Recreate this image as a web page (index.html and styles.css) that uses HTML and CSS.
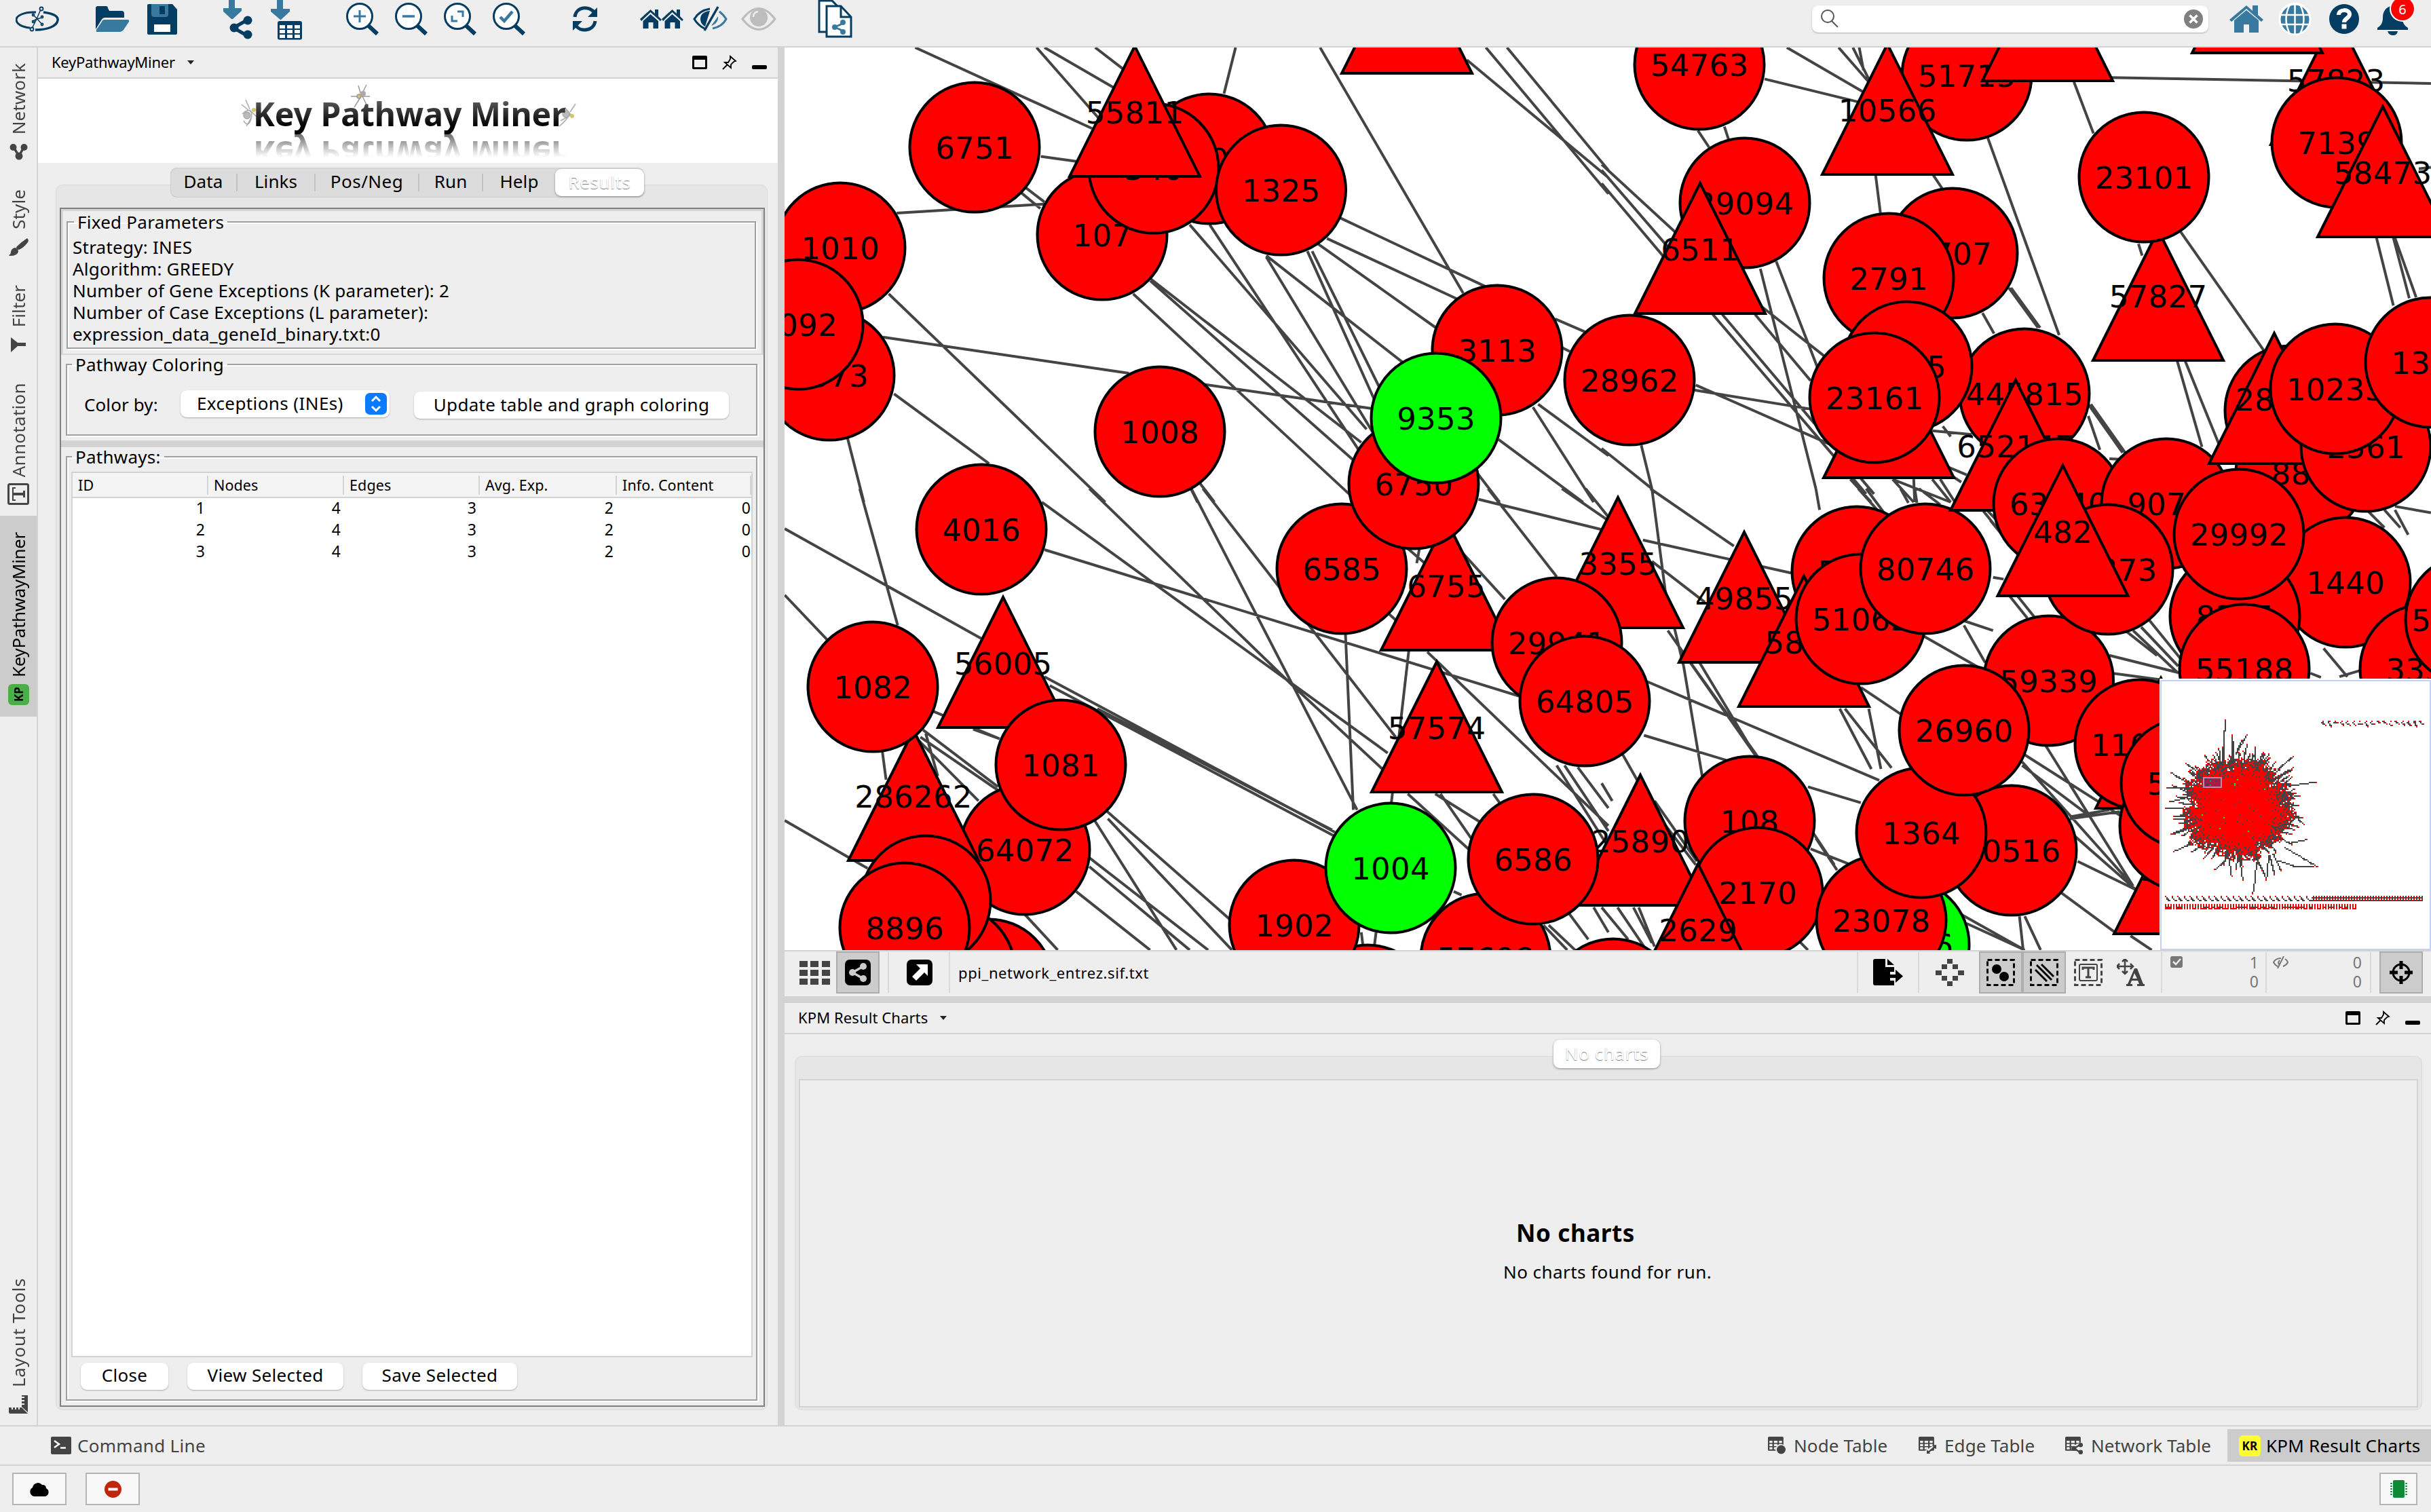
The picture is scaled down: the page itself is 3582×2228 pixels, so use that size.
FILE: index.html
```html
<!DOCTYPE html>
<html lang="en">
<head>
<meta charset="utf-8">
<title>KeyPathwayMiner</title>
<link rel="stylesheet" href="styles.css">
</head>
<body>
<svg class="defs" width="0" height="0">
  <defs>
    <g id="share"><path d="M9 14 24 5M9 16 24 26" stroke="currentColor" stroke-width="4.5"/><circle cx="7" cy="15" r="6.5"/><circle cx="25" cy="6" r="6"/><circle cx="25" cy="25" r="6"/></g>
    <g id="grid"><path fill-rule="evenodd" d="M2 0h22q2 0 2 2v22q0 2-2 2H2q-2 0-2-2V2q0-2 2-2zM2.500 7.500v4h5v-4zm7.500 0v4h6v-4zm8.500 0v4h5v-4zM2.500 13.500v4h5v-4zm7.500 0v4h6v-4zm8.500 0v4h5v-4zM2.500 19.500v4h5v-4zm7.500 0v4h6v-4zm8.500 0v4h5v-4z"/></g>
    <g id="lens"><circle cx="20" cy="24" r="18.500" fill="#fff" stroke="#053c61" stroke-width="3"/><path d="M33 38 46 50" stroke="#053c61" stroke-width="6" /></g>
    <g id="house"><path d="M0 15 15.500 1 22 7V1h5v10l5 5-2 2L15.500 5 2 18z"/><path d="M4.500 18 15.500 8 27 18v11h-7.500v-9h-7v9h-8z"/></g>
  </defs>
</svg>

<header class="toolbar">
  <svg class="tool" width="64" viewBox="23 0 64 70" fill="none" stroke="#053c61"><path d="M53 18C34 17 24 24 24 29c0 6 8 11 20 12" stroke-width="3"/><path d="M64 18c15 2 22 6 21 12-1 8-14 14-33 14" stroke-width="3.500"/><path d="M60 14 54 28 47 42M49 22l6 6 7 8M49 31l5-3 8-2" stroke-width="1.500"/><g fill="#eee" stroke-width="1.800"><circle cx="61" cy="13" r="2.500"/><circle cx="47" cy="43" r="2.500"/><circle cx="49" cy="22" r="1.500"/><circle cx="62" cy="25" r="1.500"/><circle cx="62" cy="36" r="1.500"/><circle cx="49" cy="32" r="1.500"/></g></svg>
  <div class="tools file">
    <svg class="tool" width="50" viewBox="141 0 50 70"><path fill="#053c61" d="M141 12q0-3 3-3h12q3 0 3 3l2 4h18q4 0 4 4v6h-28q-4 0-6 4l-8 13z"/><path fill="#3879a0" d="M154 29h34q3 0 2 3l-8 12q-2 3-5 3h-34q-2 0-1-3l8-12q1-3 4-3z"/></svg>
    <svg class="tool" width="45" viewBox="217 0 45 70"><path fill="#053c61" d="M219 6h35l7 8v35q0 2-2 2h-40q-2 0-2-2V8q0-2 2-2z"/><path fill="#3879a0" d="M223 6h25v15q0 4-4 4h-17q-4 0-4-4z"/><path fill="#053c61" d="M235 9h8v12h-8z"/><path fill="#fff" d="M227 36h24v11h-24z"/></svg>
  </div>
  <div class="tools import">
    <svg class="tool" width="43" viewBox="329 0 43 70"><path fill="#3879a0" d="M337 0h9v12h10v4l-13 12h-2l-13-12v-4h9z"/><path d="M344 41 365 29M344 41 365 53" stroke="#053c61" stroke-width="5"/><g fill="#053c61"><circle cx="345" cy="41" r="6.500"/><circle cx="365" cy="30" r="6.500"/><circle cx="365" cy="51" r="6.500"/></g></svg>
    <svg class="tool" width="46" viewBox="399 0 46 70"><path fill="#3879a0" d="M408 0h9v13h10v4l-13 12h-1l-14-12v-4h9z"/><rect x="409" y="31" width="36" height="27.500" rx="3" fill="#053c61"/><path fill="#fff" d="M412 37h8v5h-8zm11 0h8v5h-8zm11 0h8v5h-8zM412 44h8v5h-8zm11 0h8v5h-8zm11 0h8v5h-8zM412 51h8v5h-8zm11 0h8v5h-8zm11 0h8v5h-8z"/></svg>
  </div>
  <div class="tools zooms">
    <svg class="tool" width="50" viewBox="0 0 50 70"><use href="#lens"/><path d="M20 15v18M11 24h18" stroke="#3879a0" stroke-width="3"/></svg>
    <svg class="tool" width="50" viewBox="0 0 50 70"><use href="#lens"/><path d="M11 24h18" stroke="#3879a0" stroke-width="3.500"/></svg>
    <svg class="tool" width="50" viewBox="0 0 50 70"><use href="#lens"/><path d="M20 17h8v8M12 23v8h8" fill="none" stroke="#3879a0" stroke-width="3"/></svg>
    <svg class="tool" width="50" viewBox="0 0 50 70"><use href="#lens"/><path d="m11 25 6 6 12-14" fill="none" stroke="#3879a0" stroke-width="4.500"/></svg>
  </div>
  <svg class="tool refresh" width="36" viewBox="844 0 36 70"><path fill="none" stroke="#053c61" stroke-width="5" d="M847 25c2-16 22-17 29-6M877 31c-2 15-22 17-29 6"/><path fill="#053c61" d="M880 11v14h-14zM844 45V31h14z"/></svg>
  <div class="tools views">
    <svg class="tool" width="66" viewBox="943 0 66 70" fill="#053c61"><use href="#house" x="943" y="13"/><use href="#house" x="975" y="13"/></svg>
    <svg class="tool" width="63" viewBox="1019 0 63 70"><path d="M1046 13c-12 2-19 8-23 15 4 7 9 11 15 14" fill="none" stroke="#053c61" stroke-width="3"/><path d="M1050 42c10-2 17-8 20-14-3-5-6-8-10-11" fill="none" stroke="#3879a0" stroke-width="3"/><path d="M1046 16c-10 1-14 6-14 12 0 5 3 9 7 11z" fill="#053c61"/><path d="M1048 38c7-2 11-8 10-14z" fill="#3879a0"/><path d="M1058 10 1038 45" stroke="#053c61" stroke-width="3.500"/></svg>
    <svg class="tool" width="53" viewBox="1093 0 53 70"><path d="M1095 28q24-31 48 0-24 31-48 0z" fill="none" stroke="#bdbdbd" stroke-width="3"/><ellipse cx="1119" cy="26" rx="13" ry="13" fill="#bdbdbd"/><path d="M1111 25q0-7 7-8" stroke="#eee" stroke-width="2.500" fill="none"/></svg>
  </div>
  <svg class="tool docs" width="51" viewBox="1205 0 51 70" fill="#fff" stroke="#053c61" stroke-width="3"><path d="M1207 1h19l9 9v37h-28z"/><path d="M1218 9h21l15 16v29h-36z"/><path d="M1239 9v16h15" fill="none"/><g fill="#3879a0" stroke="#3879a0"><path d="M1243 34 1230 40 1243 46" fill="none"/><circle cx="1230" cy="40" r="2.500"/><circle cx="1242" cy="33" r="2.500"/><circle cx="1242" cy="47" r="2.500"/></g></svg>
  <div class="search">
    <svg width="26" height="28" viewBox="0 0 26 28" fill="none" stroke="#555" stroke-width="2"><circle cx="10" cy="10" r="9"/><path d="m16 17 9 9"/></svg>
    <svg width="28" height="28" viewBox="0 0 28 28"><circle cx="14" cy="14" r="14" fill="#808080"/><path d="m8.500 8.500 11 11m0-11-11 11" stroke="#fff" stroke-width="3.500"/></svg>
  </div>
  <div class="tools links">
    <svg class="tool" width="50" viewBox="3285 0 50 70" fill="#3879a0"><path d="m3285 29 25-21 9 8V8h8v14l8 7-3 3-22-19-22 19z"/><path d="m3292 30 18-15 18 15v18h-14V36h-8v12h-14z"/></svg>
    <svg class="tool" width="50" viewBox="3357 0 50 70"><circle cx="3381.500" cy="28" r="24" fill="#fff"/><circle cx="3381.500" cy="28.500" r="21" fill="#3879a0"/><path d="M3381.500 7v43M3360 22h43M3360 36h43M3374 7q-11 21 0 43M3389 7q11 21 0 43" stroke="#fff" stroke-width="2.500" fill="none"/></svg>
    <svg class="tool" width="50" viewBox="3429 0 50 70"><circle cx="3454" cy="28" r="22" fill="#053c61"/><path d="M3446 22c0-9 16-9 16-1 0 6-8 6-8 12" fill="none" stroke="#fff" stroke-width="6"/><path d="M3450.500 35.500h7v7h-7z" fill="#fff"/></svg>
    <div class="bell">
      <svg class="tool" width="57" viewBox="3501 0 57 70" fill="#053c61"><path d="M3526 8c-11 2-15 9-15 18 0 8-3 12-8 15v3h45v-3c-5-3-8-7-8-15 0-9-4-16-14-18z"/><path d="M3518 46h15q-1 6-7 6t-8-6z"/></svg>
      <span class="badge">6</span>
    </div>
  </div>
</header>

<main class="workspace">
  <nav class="rail">
    <div class="rail-tab network"><span>Network</span><svg width="27" height="24" viewBox="0 0 27 24"><path d="M6 5 14 18 21 5" fill="none" stroke="#444" stroke-width="3.500"/><circle cx="5.500" cy="5" r="5"/><circle cx="21.500" cy="5" r="5"/><circle cx="14" cy="18" r="5.500"/></svg></div>
    <div class="rail-tab style"><span>Style</span><svg width="30" height="28" viewBox="0 0 30 28"><path d="M28 1q3 3 1 6-6 8-13 11-4 0-4-4Q20 6 28 1z"/><path d="M10 15q5 1 5 6-2 6-12 6-2 0-2-1 3-1 3-5 1-5 6-6z"/></svg></div>
    <div class="rail-tab filter"><span>Filter</span><svg width="23" height="22" viewBox="0 0 23 22"><path d="M0 0 10 8h12v5H10L0 22z"/></svg></div>
    <div class="rail-tab annotation"><span>Annotation</span><svg width="32" height="32" viewBox="0 0 32 32"><rect x="1.500" y="1.500" width="29" height="29" rx="2" fill="none" stroke="#444" stroke-width="3"/><path d="M7 6h5v2H9v6h14v-3h3v10h-3v-3H9v6h3v2H7z"/></svg></div>
    <div class="rail-tab kpm"><span>KeyPathwayMiner</span><b class="kp-mark">KP</b></div>
    <div class="rail-tab layout"><span>Layout Tools</span><svg width="30" height="28" viewBox="0 0 30 28"><path d="M1 19h4v3h2v-3h3v3h2v-3h3v3h2v-3h3L29 28H3q-2 0-2-2z"/><path d="M20 1h9v25l-9-8v-3h4v-2h-4v-3h4V8h-4V5h4V3h-4z"/></svg></div>
  </nav>

  <section class="control">
    <div class="panel-head">
      <span class="title panel-title">KeyPathwayMiner</span><i class="caret"></i>
      <div class="win">
        <svg width="22" height="20" viewBox="0 0 22 20"><path fill-rule="evenodd" d="M2 0h18q2 0 2 2v16q0 2-2 2H2q-2 0-2-2V2q0-2 2-2zm1 6v11h16V6z"/></svg>
        <svg width="24" height="22" viewBox="0 0 24 22" fill="none" stroke="#000" stroke-width="1.800"><path d="m13 2 8 7-3 1-4 4 0 5-9-8 5 0 3-5zM9 14l-7 7"/></svg>
        <svg width="22" height="20" viewBox="0 0 22 20"><rect y="14" width="22" height="6" rx="2"/></svg>
      </div>
    </div>
    <div class="brand">
      <svg class="bug left" width="28" height="42" viewBox="0 0 28 42" fill="none" stroke="#aaa" stroke-width="1.500"><path d="M8 1l6 14M2 8l11 9M3 22q8-8 12-4t0 14-10 0M14 16l10 10M9 40l8-14"/><circle cx="20" cy="16" r="3" fill="#d5c46a" stroke="none"/><circle cx="10" cy="24" r="5" fill="#bbb"/></svg>
      <svg class="bug top" width="34" height="36" viewBox="0 0 34 36" fill="none" stroke="#999" stroke-width="1.500"><path d="M14 2l4 14M26 1l-8 16M3 18h28M18 18 8 34M20 18l6 12"/><circle cx="15" cy="18" r="3" fill="#d5c46a" stroke="#999"/><circle cx="21" cy="14" r="4" fill="#aaa" stroke="none"/></svg>
      <svg class="bug right" width="30" height="36" viewBox="0 0 30 36" fill="none" stroke="#aaa" stroke-width="1.500"><path d="M28 1l-8 12M12 6l10 12M4 34q10-8 16-18M6 26l14-8"/><circle cx="23" cy="19" r="3" fill="#d5c46a" stroke="none"/><circle cx="14" cy="16" r="5" fill="#bbb"/></svg>
      <span class="wordmark">Key Pathway Miner</span>
    </div>
    <div class="tabs"><span class="tab t1">Data</span><span class="tab t2">Links</span><span class="tab t3">Pos/Neg</span><span class="tab t4">Run</span><span class="tab t5">Help</span><span class="tab on">Results</span></div>
    <div class="tab-body">
      <div class="results">
        <div class="sec fixed">
          <fieldset><legend>Fixed Parameters</legend>
            <div class="params"><div>Strategy: INES</div><div>Algorithm: GREEDY</div><div>Number of Gene Exceptions (K parameter): 2</div><div>Number of Case Exceptions (L parameter):</div><div>expression_data_geneId_binary.txt:0</div></div>
          </fieldset>
        </div>
        <div class="sec coloring">
          <fieldset><legend>Pathway Coloring</legend>
            <div class="color-row"><label>Color by:</label>
              <div class="select"><span>Exceptions (INEs)</span><svg width="32" height="32" viewBox="0 0 32 32"><rect width="32" height="32" rx="7" fill="#0a7bff"/><path d="m10 12 6-6 6 6M10 20l6 6 6-6" fill="none" stroke="#fff" stroke-width="3"/></svg></div>
              <button class="btn update">Update table and graph coloring</button></div>
          </fieldset>
        </div>
        <div class="sec pathways">
          <fieldset><legend>Pathways:</legend>
            <div class="table">
              <div class="tr th"><span>ID</span><span>Nodes</span><span>Edges</span><span>Avg. Exp.</span><span>Info. Content</span></div>
              <div class="tr"><span>1</span><span>4</span><span>3</span><span>2</span><span>0</span></div>
              <div class="tr"><span>2</span><span>4</span><span>3</span><span>2</span><span>0</span></div>
              <div class="tr"><span>3</span><span>4</span><span>3</span><span>2</span><span>0</span></div>
            </div>
            <div class="actions"><button class="btn close">Close</button><button class="btn view">View Selected</button><button class="btn save">Save Selected</button></div>
          </fieldset>
        </div>
      </div>
    </div>
  </section>

  <section class="right">
    <div class="network-view">
      <svg id="graph" width="2426" height="1330" viewBox="1156 70 2426 1330"></svg>
      <canvas id="bird" width="400" height="400"></canvas>
    </div>
    <div class="view-bar">
      <svg class="grid9" width="45" height="35" viewBox="0 0 45 35" fill="#444"><path d="M0 0h12v9H0zm16 0h12v9H16zm17 0h12v9H33zM0 13h12v9H0zm16 0h12v9H16zm17 0h12v9H33zM0 26h12v9H0zm16 0h12v9H16zm17 0h12v9H33z"/></svg>
      <span class="toggle"><svg width="38" height="38" viewBox="0 0 38 38"><rect width="38" height="38" rx="7"/><path d="m27 10-16 9 16 9" stroke="#ccc" stroke-width="3.500" fill="none"/><g fill="#ccc"><circle cx="11" cy="19" r="5"/><circle cx="27" cy="10" r="5"/><circle cx="27" cy="28" r="5"/></g></svg></span>
      <i class="sep s1"></i>
      <svg class="detach" width="38" height="38" viewBox="0 0 38 38"><rect width="38" height="38" rx="7"/><path d="M14 7h17v17l-5-5-12 12-6-6 12-12z" fill="#fff"/></svg>
      <i class="sep s2"></i>
      <span class="file-name">ppi_network_entrez.sif.txt</span>
      <div class="view-tools">
        <i class="sep"></i>
        <svg class="export" width="46" height="40" viewBox="0 0 46 40"><path d="M3 0h15v12h13v7h-6v13h6v7H3q-3 0-3-3V3q0-3 3-3z"/><path d="M21 0 31 9H21z"/><path d="M17 23h16v-7l11 9.500L33 35v-7H17z"/></svg>
        <i class="sep"></i>
        <svg class="diamond" width="42" height="40" viewBox="0 0 42 40" fill="#444"><path d="M17 0h8v7h-8zM9 8h8v7H9zm16 0h8v7h-8zM0 17h9v7H0zm33 0h9v7h-9zM9 25h8v7H9zm16 0h8v7h-8zM17 33h8v7h-8z"/></svg>
        <span class="toggle"><svg width="42" height="40" viewBox="0 0 42 40"><rect x="1.500" y="1.500" width="39" height="37" fill="none" stroke="#000" stroke-width="3" stroke-dasharray="7 4"/><circle cx="15" cy="15" r="7"/><circle cx="26" cy="26" r="7"/></svg></span><span class="toggle"><svg width="42" height="40" viewBox="0 0 42 40"><g fill="none" stroke="#000" stroke-width="3"><rect x="1.500" y="1.500" width="39" height="37" stroke-dasharray="7 4"/><path d="m8 16 17 17M10 9l22 22M17 8l18 18"/></g></svg></span>
        <svg class="text-sel" width="42" height="40" viewBox="0 0 42 40"><g fill="none" stroke="#444"><rect x="1.500" y="1.500" width="39" height="37" stroke-width="3" stroke-dasharray="7 4"/><rect x="8" y="8" width="26" height="24" rx="2" stroke-width="2"/><path d="M13 16v-3h16v3M21 13v14M17 27h8" stroke-width="3"/></g></svg>
        <svg class="text-move" width="42" height="40" viewBox="0 0 42 40"><path d="M12 0v22M1 11h22M8 4l4-4 4 4M8 18l4 4 4-4M4 7l-4 4 4 4M20 7l4 4-4 4" fill="none" stroke="#444" stroke-width="2.500"/><path d="M26 14h4l9 23h2v3H30v-3h3l-2-5h-9l-2 5h3v3h-9v-3h2zm0 7-3 8h7z" fill="#444" fill-rule="evenodd"/></svg>
        <i class="sep"></i>
        <div class="counts">
          <svg width="18" height="18" viewBox="0 0 18 18"><rect width="18" height="17" rx="3" fill="#777"/><path d="m4 8 4 4 7-8" fill="none" stroke="#eee" stroke-width="2.500"/></svg><span>1<br>0</span>
        </div>
        <i class="sep"></i>
        <div class="counts hidden-count">
          <svg width="25" height="18" viewBox="0 0 25 18" fill="none" stroke="#777" stroke-width="2"><path d="M13 3Q5 3 2 9q2 4 6 6M16 15q5-2 7-6-1-3-4-5M17 0 8 18M11 6q-3 3-1 6"/></svg><span>0<br>0</span>
        </div>
        <i class="sep"></i>
        <span class="toggle aim"><svg width="34" height="34" viewBox="0 0 34 34"><circle cx="17" cy="17" r="12" fill="none" stroke="#000" stroke-width="3"/><path d="M17 0v12M17 22v12M0 17h12M22 17h12" stroke="#000" stroke-width="5"/></svg></span>
      </div>
    </div>
    <div class="splitter"></div>
    <div class="panel-head charts-head">
      <span class="title">KPM Result Charts</span><i class="caret"></i>
      <div class="win">
        <svg width="22" height="20" viewBox="0 0 22 20"><path fill-rule="evenodd" d="M2 0h18q2 0 2 2v16q0 2-2 2H2q-2 0-2-2V2q0-2 2-2zm1 6v11h16V6z"/></svg>
        <svg width="24" height="22" viewBox="0 0 24 22" fill="none" stroke="#000" stroke-width="1.800"><path d="m13 2 8 7-3 1-4 4 0 5-9-8 5 0 3-5zM9 14l-7 7"/></svg>
        <svg width="22" height="20" viewBox="0 0 22 20"><rect y="14" width="22" height="6" rx="2"/></svg>
      </div>
    </div>
    <div class="charts">
      <span class="tab on charts-tab">No charts</span>
      <div class="charts-body"><div class="charts-inner"><div class="empty"><h2>No charts</h2><p>No charts found for run.</p></div></div></div>
    </div>
  </section>
</main>

<footer class="dock">
  <span class="dock-tab cmd"><svg width="30" height="26" viewBox="0 0 30 26"><rect width="30" height="26" rx="2" fill="#444"/><path d="m5 6 7 5-7 5M14 16.500h8" fill="none" stroke="#fff" stroke-width="2.500"/></svg><span>Command Line</span></span>
  <span class="dock-tab node-tab"><svg width="27" height="26" viewBox="0 0 27 26" fill="#444"><use href="#grid" transform="scale(.88 .8)"/><circle cx="19" cy="19" r="8" fill="#eee"/><circle cx="19.500" cy="19" r="6.500"/></svg><span>Node Table</span></span>
  <span class="dock-tab edge"><svg width="27" height="26" viewBox="0 0 27 26" fill="#444"><use href="#grid" transform="scale(.88 .8)"/><path d="M27 10 11 26H9v-5z" fill="#eee"/><path d="M26 12v6l-3-1-7 6 1 2h-5v-5l3 1 7-6-2-2z"/></svg><span>Edge Table</span></span>
  <span class="dock-tab net"><svg width="27" height="26" viewBox="0 0 27 26" fill="#444" color="#444"><use href="#grid" transform="scale(.88 .8)"/><path d="M10 14 24 8v18z" fill="#eee"/><use href="#share" transform="translate(9 9) scale(.55)"/></svg><span>Network Table</span></span>
  <span class="dock-tab active"><b class="kr-mark">KR</b><span>KPM Result Charts</span></span>
</footer>
<footer class="status">
  <span class="chip"><svg width="30" height="23" viewBox="0 0 30 23"><path d="M7 22a7 7 0 0 1-2-13A8 8 0 0 1 19 5a5 5 0 0 1 6 5 6.500 6.500 0 0 1-1 12z"/></svg></span>
  <span class="chip"><svg width="25" height="25" viewBox="0 0 25 25"><circle cx="12.500" cy="12.500" r="12.500" fill="#c0260b"/><path d="M5.500 10.500h14v4h-14z" fill="#fff"/></svg></span>
  <span class="chip mem"><svg width="25" height="26" viewBox="0 0 25 26"><rect x="4" width="17" height="26" rx="2" fill="#0f8a34"/><path d="M1.500 4v20M23.500 4v20" stroke="#0f8a34" stroke-width="2.500" stroke-dasharray="2 2"/></svg></span>
</footer>
<script src="app.js"></script>
</body>
</html>
```
FILE: styles.css
```css
* { box-sizing: border-box; }
body { margin: 0; width: 3582px; height: 2228px; overflow: hidden; display: flex; flex-direction: column; background: #eee; color: #000; font: 26px/32px "Noto Sans", "Open Sans", sans-serif; }
svg { display: block; flex: none; }
.defs { position: absolute; }
i.sep { flex: none; width: 2px; height: 60px; background: #d9d9d9; }

.toolbar { flex: none; height: 70px; border-bottom: 2px solid #d3d3d3; display: flex; padding: 0 24px 0 23px; overflow: hidden; }
.tool { height: 70px; }
.tools { display: flex; }
.file { gap: 26px; margin-left: 54px; }
.import { gap: 27px; margin-left: 67px; }
.zooms { gap: 22px; margin-left: 65px; padding-top: 0; }
.refresh { margin-left: 68px; }
.views { gap: 10px; margin-left: 63px; }
.docs { margin-left: 60px; }
.search { margin: 8px 31px 0 auto; width: 584px; height: 40px; border-radius: 9px; background: #fff; box-shadow: 0 1px 2px #aaa; display: flex; align-items: center; justify-content: space-between; padding: 0 8px 0 13px; }
.links { gap: 22px; }
.bell { position: relative; }
.badge { position: absolute; right: 1px; top: -4px; width: 34px; height: 34px; border-radius: 50%; background: #f00; box-shadow: 0 0 0 2px #fff; color: #fff; font-size: 20px; line-height: 36px; text-align: center; }

.workspace { flex: none; height: 2030px; display: flex; }
.rail { width: 56px; border-right: 2px solid #d3d3d3; padding-top: 6px; display: flex; flex-direction: column; color: #444; fill: #444; }
.rail-tab { flex: none; display: flex; flex-direction: column; align-items: center; justify-content: flex-end; }
.rail-tab span { writing-mode: vertical-rl; transform: rotate(180deg); white-space: nowrap; line-height: 30px; letter-spacing: .1px; }
.network { height: 182px; padding-bottom: 22px; gap: 14px; }
.style { height: 140px; padding-bottom: 20px; gap: 12px; }
.filter { height: 142px; padding-bottom: 21px; gap: 15px; }
.annotation { height: 220px; padding-bottom: 16px; gap: 9px; }
.kpm { height: 296px; padding-bottom: 17px; gap: 10px; background: #ccc; color: #000; }
.rail-tab.annotation span { letter-spacing: .3px; }
.rail-tab.kpm span { letter-spacing: -.35px; }
.layout { margin-top: auto; padding-bottom: 17px; gap: 11px; }
.rail-tab.layout span { letter-spacing: .7px; }
.kp-mark { width: 31px; height: 31px; border-radius: 6px; background: #4cae48; font-size: 17px; line-height: 31px; text-align: center; writing-mode: vertical-rl; transform: rotate(180deg); }

.control { width: 1100px; border-right: 10px solid #d3d3d3; display: flex; flex-direction: column; }
.panel-head { flex: none; height: 46px; border-bottom: 2px solid #d3d3d3; padding: 0 16px 0 20px; display: flex; align-items: center; font-size: 22px; }
.title { white-space: nowrap; letter-spacing: .1px; line-height: 30px; padding-bottom: 2px; }
.panel-title { letter-spacing: -.25px; }
.caret { margin-left: 18px; border: 5px solid transparent; border-top: 6px solid #222; border-bottom: 0; }
.win { margin-left: auto; display: flex; gap: 21px; align-items: center; padding-bottom: 1px; }
.brand { flex: none; position: relative; height: 124px; background: #fff; }
.wordmark { position: absolute; left: 317px; top: 22px; font-size: 48px; line-height: 60px; font-weight: 700; letter-spacing: 0; white-space: nowrap; background: linear-gradient(#555 20%, #000 80%); -webkit-background-clip: text; color: transparent; -webkit-box-reflect: below -2px linear-gradient(transparent 40%, rgba(0,0,0,.6)); }
.bug { position: absolute; }
.bug.left { left: 298px; top: 30px; }
.bug.top { left: 458px; top: 8px; }
.bug.right { left: 764px; top: 36px; }
.tabs { flex: none; align-self: center; position: relative; z-index: 1; margin: 7px 2px 0 0; width: 698px; height: 44px; border-radius: 10px; background: #dcdcdc; box-shadow: inset 0 0 2px #aaa; display: flex; align-items: center; }
.tab { height: 26px; line-height: 23px; text-align: center; border-right: 2px solid #c3c3c3; white-space: nowrap; letter-spacing: .1px; }
.t1 { width: 99px; } .t2 { width: 115px; } .t3 { width: 153px; letter-spacing: .5px; } .t4 { width: 94px; } .t5 { width: 106px; border: 0; }
.tab.on { width: 131px; height: 40px; line-height: 38px; border: 0; border-radius: 9px; background: #fff; color: #fff; box-shadow: 0 1px 3px #888; text-shadow: 0 1px 1px #777; letter-spacing: .6px; }
.tab-body { flex: none; margin: -19px 0 0 26px; width: 1049px; height: 1806px; border: 1px solid #dadada; border-radius: 10px; background: #e6e6e6; padding: 33px 3px 5px 5px; }
.results { height: 1767px; width: 1039px; border: 2px solid #808080; background: #eee; display: flex; flex-direction: column; letter-spacing: .1px; }
fieldset { margin: 0; min-width: 0; padding: 0; border: 2px solid #a0a0a0; box-shadow: 2px 2px 0 #fff, inset 2px 2px 0 #fff; }
legend { margin-left: 9px; padding: 0 5px; line-height: 29px; height: 28px; letter-spacing: .25px; }
.fixed { height: 215px; border: solid #d6d6d6; border-width: 3px 3px 2px; padding: 2px 8px 0 5px; }
.fixed fieldset { height: 201px; }
.params { padding: 7px 0 0 7px; letter-spacing: .24px; }
.coloring { height: 136px; padding: 0 9px 0 7px; border-bottom: 10px solid #d3d3d3; }
.coloring fieldset { height: 119px; }
.coloring legend, .pathways legend { margin-left: 7px; }
.color-row { display: flex; padding: 24px 0 0 25px; }
.color-row label { width: 142px; line-height: 43px; }
.select, .btn { background: #fff; border: 0; border-radius: 9px; box-shadow: 0 1px 2px #aaa; font: inherit; letter-spacing: .2px; padding: 0 0 2px; color: #000; white-space: nowrap; }
.select { width: 308px; height: 40px; padding: 0 4px 0 24px; display: flex; align-items: center; justify-content: space-between; }
.select span { padding-bottom: 3px; letter-spacing: .4px; }
.update { margin: 2px 0 0 36px; width: 464px; height: 40px; letter-spacing: .28px; }
.pathways { padding: 0 9px 0 7px; }
.pathways fieldset { height: 1405px; }
.table { margin: 8px 0 0 6px; width: 1004px; height: 1305px; border: 2px solid #d3d3d3; background: #fff; font-size: 23px; }
.tr { display: grid; grid-template-columns: 200px 200px 200px 202px 198px; height: 32px; }
.tr span { text-align: right; padding-right: 5px; line-height: 29px; }
.tr span:last-child { padding-right: 1px; }
.tr.th { height: 37px; padding-top: 4px; background: #f4f4f4; border-bottom: 2px solid #d3d3d3; font-size: 21.500px; }
.tr.th span { height: 28px; line-height: 27px; text-align: left; padding-left: 8px; border-right: 2px solid #d3d3d3; }
.actions { display: flex; gap: 28px; padding: 8px 0 0 20px; }
.actions .btn { height: 40px; padding-bottom: 4px; letter-spacing: .35px; }
.close { width: 129px; } .view { width: 230px; } .save { width: 228px; }

.right { flex: 1; display: flex; flex-direction: column; }
.network-view { flex: none; position: relative; height: 1330px; background: #fff; overflow: hidden; }
#bird { position: absolute; right: 0; bottom: 0; }
.node { stroke: #000; stroke-width: 4; fill: #f00; }
.node.hit { fill: #0f0; }
.edges { fill: none; stroke: #444; stroke-width: 4; }
#graph text { font: 45px "DejaVu Sans", sans-serif; letter-spacing: .3px; text-anchor: middle; fill: #000; }
.view-bar { flex: none; height: 68px; border-top: 2px solid #d3d3d3; display: flex; align-items: center; padding: 0 12px 4px 22px; }
.toggle { flex: none; width: 64px; height: 62px; border: 2px solid #adadad; background: #ccc; display: flex; align-items: center; justify-content: center; }
.grid9 { margin-right: 9px; }
.s1 { margin: 0 26px 0 12px; }
.s2 { margin: 0 12px 0 24px; }
.file-name { font-size: 22px; letter-spacing: .6px; }
.view-tools { margin-left: auto; display: flex; align-items: center; }
.export { margin: 0 20px 0 22px; }
.diamond { margin: 0 22px 0 24px; }
.text-sel { margin: 0 21px 0 12px; }
.text-move { margin-right: 23px; }
.counts { width: 152px; height: 60px; display: flex; justify-content: space-between; padding: 6px 10px 0 12px; color: #777; font-size: 23px; line-height: 28px; text-align: right; }
.counts svg { margin-top: 0; }
.counts span { margin-top: -5px; }
.hidden-count { padding-right: 12px; padding-left: 8px; }
.aim { margin-left: 12px; }
.splitter { flex: none; height: 10px; background: #d3d3d3; }
.charts { flex: 1; display: flex; flex-direction: column; align-items: center; padding-top: 8px; }
.tab.charts-tab { flex: none; position: relative; z-index: 1; width: 157px; height: 42px; line-height: 41px; margin-right: 3px; }
.charts-body { margin-top: -18px; width: 2398px; height: 522px; border: 1px solid #dadada; border-radius: 10px; background: #e6e6e6; padding: 33px 5px 4px; margin-left: 2px; }
.charts-inner { height: 484px; border: 2px solid #d3d3d3; background: #eee; }
.empty { width: 320px; margin: 204px 0 0 1036px; }
h2 { margin: 0; padding-left: 19px; font-size: 35px; line-height: 42px; letter-spacing: .6px; white-space: nowrap; }
.empty p { margin: 20px 0 0; white-space: nowrap; letter-spacing: .45px; }

.dock { flex: none; height: 60px; border: solid #d3d3d3; border-width: 2px 0; display: flex; align-items: center; color: #444; }
.dock-tab { flex: none; height: 48px; display: flex; align-items: center; gap: 11px; white-space: nowrap; letter-spacing: .1px; }
.dock-tab > span { padding-bottom: 1px; }
.cmd { margin-left: 75px; gap: 9px; margin-right: auto; letter-spacing: .3px; }
.node-tab { width: 222px; }
.edge { width: 216px; }
.net { width: 239px; }
.active { width: 300px; padding-left: 17px; gap: 8px; background: #ccc; color: #000; letter-spacing: .2px; }
.kr-mark { width: 32px; height: 31px; border-radius: 6px; background: #ff3; font-size: 17px; line-height: 31px; text-align: center; }
.status { flex: none; height: 68px; display: flex; padding: 10px 20px 0 18px; gap: 28px; }
.chip { width: 80px; height: 48px; border: 2px solid #b5b5b5; background: #f8f8f8; display: flex; align-items: center; justify-content: center; }
.mem { margin-left: auto; width: 56px; }
```
FILE: app.js
```js
const NS = 'http://www.w3.org/2000/svg';
const graph = document.getElementById('graph');
const add = (tag, attrs, text) => {
  const el = document.createElementNS(NS, tag);
  for (const k in attrs) el.setAttribute(k, attrs[k]);
  if (text) el.textContent = text;
  graph.appendChild(el);
};

// Edge tiles: scale x, scale y, origin x, origin y, then x1,y1,x2,y2 segments.
const tiles = [
  [.778, .4337, 1150, 60, `255,23,590,298 485,23,605,268 500,23,632,160 596,23,648,95 862,23,840,180 1022,23,1293,858 1300,65,1568,465 1336,23,1568,520 1376,23,1568,440 493,393,560,410 220,586,500,555 465,500,500,548 455,515,492,570 205,860,615,1568 194,1007,660,1130 800,1167,1120,1250 215,1200,395,1437 127,1350,158,1568 668,860,1080,1545 700,808,1100,1365 700,815,1085,1425 775,625,1110,1320 813,625,1095,1390 920,730,1180,1095 920,735,1125,1340 998,715,1130,1240 1007,715,1135,1180 1018,690,1245,980 1035,672,1285,880 1060,602,1335,835 1467,945,1525,990 1480,1042,1495,1056 1435,1235,1568,1410 1425,1245,1540,1568 1360,1355,1520,1568 1320,1470,1362,1568 778,1525,790,1568 795,1505,822,1568`],
  [.7793, .4337, 2360, 60, `350,23,500,180 448,23,505,140 475,23,505,130 487,23,495,100 308,130,490,210 960,125,1568,145 893,140,930,315 730,330,865,1000 182,305,203,362 232,292,240,335 0,420,145,660 0,440,125,700 0,485,120,740 518,457,527,585 627,457,645,505 1015,690,1022,730 1095,650,1253,1055 1465,670,1497,900 1497,670,1527,875 1500,670,1540,872 1545,435,1568,430 1088,1087,1135,1380 1103,1087,1167,1370 300,775,405,1522 330,750,408,1110 300,900,420,1070 210,930,500,1540 228,930,515,1540 290,930,395,1155 175,1187,400,1253 178,1170,430,1370 75,1375,95,1522 0,1385,95,1522 720,925,742,995 770,840,825,975 774,840,829,975 920,1235,985,1400 925,1235,990,1400 920,1275,942,1390 625,1325,700,1338 645,1310,660,1345 630,1430,690,1475 630,1440,680,1500 960,1420,980,1422 550,1490,660,1568 550,1490,590,1568 590,1490,592,1568 625,1490,660,1568 640,1490,668,1568 470,1490,510,1568`],
  [.778, .523, 1150, 720, `150,0,222,385 8,113,380,422 8,300,88,425 495,38,1150,745 585,0,970,555 970,555,1140,790 500,172,1400,585 778,0,1092,905 800,0,1165,700 500,530,1050,968 510,555,1048,978 600,620,1045,962 290,628,415,705 365,678,415,705 193,742,200,820 275,690,298,810 270,680,412,840 265,700,412,850 262,710,375,880 8,935,165,1070 615,905,850,1212 620,930,855,1300 595,935,750,1300 585,1040,810,1300 585,1065,775,1300 560,1135,700,1300 463,1200,525,1300 1070,410,1085,905 1190,457,1157,885 1322,30,1568,120 1340,0,1470,248 1225,460,1568,950 1188,860,1310,1025 1240,860,1328,942 1250,860,1308,985 1350,860,1362,885 1285,170,1372,312 1470,780,1568,1010 1485,780,1568,965 1510,785,1568,900 1445,1230,1490,1300 1455,1230,1505,1300 1540,1180,1568,1250 1490,1190,1530,1270 1480,0,1568,90 1525,0,1568,80 1100,1250,1103,1285 1128,1250,1125,1285 1150,350,1165,370 1210,170,1205,210 1185,165,1220,210 1275,1135,1290,1145`],
  [.7793, .523, 2360, 720, `95,0,120,285 120,285,155,500 155,500,190,810 92,0,250,162 405,0,412,60 485,0,530,75 500,0,535,70 565,0,580,40 592,0,596,40 600,0,640,45 78,145,365,240 95,205,195,320 125,400,290,750 168,490,295,755 185,490,290,750 85,543,525,822 80,695,235,765 40,750,120,960 390,840,490,885 450,620,510,790 460,620,548,787 490,560,565,635 505,620,528,790 608,415,720,510 680,370,740,400 685,385,725,490 720,60,790,190 735,90,790,190 690,0,760,110 770,300,805,365 785,300,820,365 800,750,990,930 795,770,1005,1120 840,725,1005,1120 795,780,925,925 885,930,980,910 885,925,960,905 880,960,1010,1130 900,1050,1010,1130 870,1140,975,1255 690,1225,800,1300 680,1200,800,1300 790,1205,797,1300 800,1205,830,1300 1000,1260,1040,1300 400,970,440,1060 395,1015,480,1065 405,985,445,1075 370,1270,390,1300 0,830,20,880 100,880,180,1050 85,880,178,1060 0,1180,50,1270 30,1180,80,1290 60,1180,95,1280 70,1180,100,1290 990,400,1050,470 1005,400,1090,520 1020,390,1090,500 1035,370,1095,480 960,470,1095,520 965,520,1065,540 1365,450,1410,530 1340,520,1360,532 1395,530,1440,510 1450,65,1480,110 1480,60,1510,110 1500,60,1525,130 1500,50,1568,68 740,250,760,255`],
];
const r = n => n.toFixed(1);
let d = '';
for (const [sx, sy, ox, oy, list] of tiles)
  for (const s of list.split(' ')) {
    const [a, b, c, e] = s.split(',').map(Number);
    d += `M${r(ox + a * sx)} ${r(oy + b * sy)}L${r(ox + c * sx)} ${r(oy + e * sy)}`;
  }
add('path', { d, class: 'edges' });

// Nodes, back to front: shape (c circle, g highlighted circle, t triangle), x, y, label.
const nodes = `c 1782 234 1002|c 1624 346 107|c 1700 248 340|t 1672 165 55811|c 1436 217 6751|c 1887.5 280 1325
c 1238 365 1010|c 1222 553 1073|c 1176 478 1092|c 1709 636 1008|c 2206 516 3113|c 1977 838 6585|t 2131 863 6755|c 2083 713 6750|g 2116 616 9353
c 1446 780 4016|t 2384 830 3355|c 2294 947 29941|c 2335 1033 64805|t 2117 1072 57574|t 1478 977 56005|c 1510 1252 64072|t 1346 1173 286262|c 1286 1012 1082|c 1563 1127 1081
c 1457 1450 |c 1400 1430 |c 1364 1327 |c 1333 1367 8896|c 2015 1488 |c 1907 1363 1902|c 2189 1412 57698|g 2049 1279 1004|t 2417 1239 25890|c 2259 1266 6586|c 2377 1479
c 2578 1210 108|c 2590 1315 2170|t 2502 1370 2629|g 2806 1392 10006|c 2964 1253 10516|c 2772 1356 23078|c 2831 1227 1364|c 3018.5 1003 59339|c 2894 1076 26960
c 2736 842 5327|t 2570 881 49855|t 2658 946 5892|c 2742 912 51062|c 2837 838 80746
c 2504 95 54763|c 2898 111 51715|t 2781 162 10566|t 3017 24 |t 2073 13 |c 2571 299 29094|t 2505 367 6511|c 2401 560 28962
c 2877 373 1707|c 2783 410 2791|c 2983 580 445815|c 2810 540 5925|t 2783 609 |c 2762 586 23161|t 2970 657 652147|c 3033 742 63940|c 3192 742 9076|c 3106 839 53373|t 3039.5 783 482
t 3180 436 57827|c 3159 261 23101|t 3442 118 57823|t 3326 -17 |c 3443 210 7139|t 3511 254 58473
c 3374 605 |c 3390 697 883|t 3351 588 2859|c 3486 658 2561|c 3441 573 10233|c 3581 534 1387
c 3456 858 1440|c 3293 908 8325|c 3299 787 29992|c 3307 986 55188|c 3573 986 3358|c 3640 913 513504
t 3184 1096 |c 3153 1097 11074|t 3211 1281 3728|c 3219 1217 |c 3221 1154 5374`;
for (const row of nodes.split(/[|\n]/)) {
  const [kind, xs, ys, label] = row.trim().split(' ');
  const x = +xs, y = +ys;
  if (kind === 't') add('path', { d: `M${x} ${y - 97}L${x + 96} ${y + 95}H${x - 96}Z`, class: 'node' });
  else add('circle', { cx: x, cy: y, r: 95.5, class: kind === 'g' ? 'node hit' : 'node' });
  if (label) add('text', { x, y: y + 17 }, label);
}

// Overview of the whole network, on a 2px cell grid.
const ctx = document.getElementById('bird').getContext('2d');
let seed = 7;
const rnd = () => (seed = (seed * 16807) % 2147483647) / 2147483647;
const put = (x, y, c) => { ctx.fillStyle = c; ctx.fillRect(Math.round((x - 20) / 6) * 2, Math.round((y - 18) / 6) * 2, 2, 2); };
const RED = '#f00', GRAY = '#444';
ctx.fillStyle = '#fff'; ctx.fillRect(0, 0, 400, 400);
ctx.strokeStyle = '#c3d0fa'; ctx.lineWidth = 2; ctx.strokeRect(2, 3, 397, 396);
const line = (x1, y1, x2, y2) => {
  const n = Math.ceil(Math.hypot(x2 - x1, y2 - y1) / 5);
  for (let i = 0; i <= n; i++) put(x1 + (x2 - x1) * i / n, y1 + (y2 - y1) * i / n, GRAY);
  put(x2, y2, RED);
};
for (let i = 0; i < 230; i++) {
  const a = rnd() * Math.PI * 2, b = a + (rnd() - .5) * .2, l = 225 + rnd() * rnd() * 95;
  line(360 + Math.cos(a) * 190, 590 + Math.sin(a) * 180, 360 + Math.cos(b) * l, 590 + Math.sin(b) * l * .93);
}
for (let y = 370; y < 820; y += 6) for (let x = 120; x < 620; x += 6) {
  const a = Math.atan2(y - 590, x - 360);
  const edge = 1 + .06 * Math.sin(a * 5 + 1) + .05 * Math.sin(a * 11) + .04 * Math.sin(a * 23);
  const q = Math.hypot((x - 360) / 212, (y - 590) / 198) / edge;
  if (q < .72) put(x, y, rnd() < .012 ? GRAY : RED);
  else if (q < .95) put(x, y, rnd() < (q - .7) * 1.4 ? GRAY : RED);
  else if (q < 1.14 && rnd() < .7) put(x, y, rnd() < .5 ? GRAY : RED);
}
[[295,395,308,200],[340,380,338,265],[345,380,340,268],[360,340,405,262],[355,350,380,290],[390,370,405,305],[440,400,440,320],[540,415,610,358],[590,490,708,472],[445,830,440,900],[440,900,430,965],[540,820,610,843],[610,843,700,843],[570,760,714,847],[600,740,668,728],[150,750,80,778],[120,590,45,590],[130,470,70,432],[150,500,50,498],[140,540,60,560],[370,800,385,905],[320,790,335,885],[500,800,490,905],[505,800,525,880],[440,790,490,900],[310,820,262,860],[600,610,658,662],[520,790,555,865]].forEach(s => line(...s));
for (let i = 0; i < 17; i++) line(735 + i * 27, 203 + rnd() * 14, 750 + i * 27, 212 + rnd() * 16), put(740 + i * 27, 203, RED);
for (let i = 0; i < 24; i++) line(62 + i * 27, 998, 46 + i * 27, 980);
for (let x = 690; x < 1180; x += 6) for (let k = 0; k < 4; k++) if ((x / 6) % 2 < 1 || k % 2) put(x, 980 + k * 6, (x / 6 + k) % 3 ? GRAY : RED);
for (let x = 46; x < 890; x += 6) for (let k = 0; k < 4; k++) if ((x / 6 | 0) % 2 || k > 1 && rnd() < .4) put(x, 1016 + k * 6, k % 3 === 0 ? RED : rnd() < .5 ? GRAY : RED);
[[242,470],[242,488],[350,478],[350,484],[362,464],[482,506],[207,620],[302,627],[284,675],[410,692]].forEach(p => put(p[0], p[1], '#0f0'));
ctx.fillStyle = 'rgba(60,60,150,.45)'; ctx.fillRect(65, 146, 27, 14);
ctx.strokeStyle = 'rgba(190,170,210,.8)'; ctx.strokeRect(65, 146, 26, 14);
```
